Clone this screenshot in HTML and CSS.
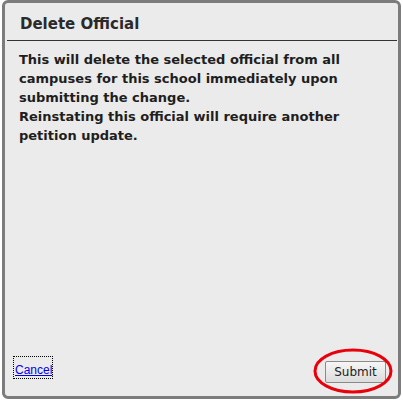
FILE: index.html
```html
<!DOCTYPE html>
<html lang="en">
<head>
  <meta charset="UTF-8" />
  <title>Delete Official</title>
  <link rel="stylesheet" href="styles.css">
</head>
<body>
  <div class="dialog">
    <div class="dialog-title">Delete Official</div>
    <div class="dialog-body">
      <p>This will delete the selected official from all campuses for this school immediately upon submitting the change.<br>
      Reinstating this official will require another petition update.</p>
    </div>
    <div class="dialog-footer">
      <a href="#" class="cancel">Cancel</a>
      <span class="submit-wrap">
        <button class="submit">Submit</button>
        <svg class="circle" width="82" height="48" viewBox="0 0 82 48">
          <ellipse cx="41" cy="24" rx="38" ry="21" fill="none" stroke="#e8000b" stroke-width="3" />
        </svg>
      </span>
    </div>
  </div>
</body>
</html>
```

FILE: styles.css
```css
html, body {
  margin: 0;
  background-color: #fff;
}
body {
  padding: 0 2px 3px 2px;
  font-family: "DejaVu Sans", Verdana, sans-serif;
}
.dialog {
  box-sizing: border-box;
  height: 399px;
  border: 3px solid #7c7c7c;
  border-radius: 6px;
  background-color: #ebebeb;
  display: flex;
  flex-direction: column;
  padding: 0 1px 0 2px;
}
.dialog-title {
  font-size: 15px;
  font-weight: bold;
  color: #2a2a2a;
  padding: 12px 0 0 13px;
  height: 25px;
  border-bottom: 1px solid #333;
}
.dialog-body {
  flex: 1;
  padding: 0 8px 0 12px;
}
.dialog-body p {
  margin: 9px 0 0 0;
  font-size: 13px;
  font-weight: bold;
  line-height: 19px;
  color: #1e1e1e;
}
.dialog-footer {
  display: flex;
  justify-content: space-between;
  align-items: flex-end;
  padding: 0 11px 13px 7px;
}
.cancel {
  display: inline-block;
  font-family: "Liberation Sans", Arial, sans-serif;
  font-size: 12px;
  line-height: 13px;
  color: #0000ee;
  outline: 1px dotted #000;
  padding: 7px 0 1px 1px;
  margin-bottom: 5px;
}
.submit-wrap {
  position: relative;
  display: inline-block;
}
.submit {
  display: block;
  font-family: "DejaVu Sans", Verdana, sans-serif;
  font-size: 12px;
  color: #222;
  width: 61px;
  height: 22px;
  padding: 0;
  border: 1px solid #8a8a8a;
  border-radius: 2px;
  background: linear-gradient(#f6f6f6, #dcdcdc);
}
.circle {
  position: absolute;
  left: -13px;
  top: -14px;
}
```
